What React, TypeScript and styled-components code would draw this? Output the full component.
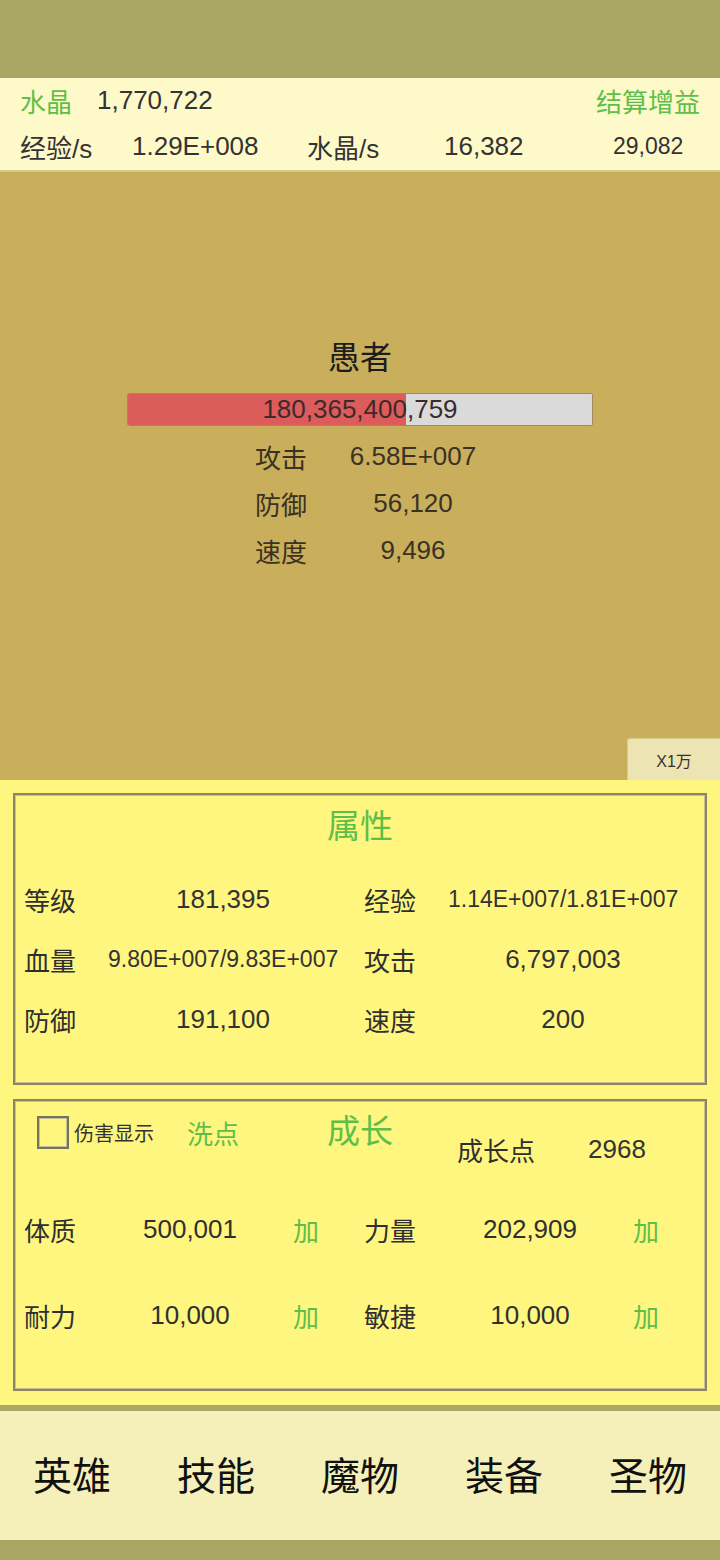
import React from "react";
import styled, { createGlobalStyle } from "styled-components";

const GlobalStyle = createGlobalStyle`
  html, body {
    margin: 0;
    padding: 0;
    background: #a9a562;
  }
  body {
    font-family: "Liberation Sans", "Noto Sans CJK SC", sans-serif;
    color: #333;
  }
`;

const GREEN = "#5dbf4a";

const Page = styled.div`
  width: 720px;
  height: 1560px;
  display: flex;
  flex-direction: column;
  background: #a9a562;
`;

const StatusSpacer = styled.div`
  height: 78px;
  flex: none;
`;

const Header = styled.div`
  height: 94px;
  flex: none;
  background: #fdf9c9;
  border-bottom: 2px solid #d8c98c;
  box-sizing: border-box;
`;

const CrystalRow = styled.div`
  height: 45px;
  display: grid;
  grid-template-columns: 77px 1fr auto;
  align-items: center;
  padding: 0 20px;
  font-size: 26px;
`;

const RateRow = styled.div`
  height: 46px;
  display: grid;
  grid-template-columns: 112px 175px 137px 169px 1fr;
  align-items: center;
  padding-left: 20px;
  font-size: 26px;
`;

const Green = styled.span`
  color: ${GREEN};
`;

const Small = styled.span`
  font-size: 23px;
`;

const Battle = styled.div`
  height: 608px;
  flex: none;
  background: #c9ae5b;
  display: flex;
  flex-direction: column;
`;

const MonsterName = styled.div`
  margin-top: 166px;
  text-align: center;
  font-size: 32px;
  line-height: 40px;
  color: #1c1c1c;
`;

const HpBar = styled.div`
  position: relative;
  margin: 15px 0 0 127px;
  width: 466px;
  height: 33px;
  box-sizing: border-box;
  border: 1px solid #a08a5c;
  border-radius: 2px;
  background: #dadada;
  overflow: hidden;
`;

const HpFill = styled.div`
  height: 100%;
  background: #dc5b5b;
`;

const HpText = styled.div`
  position: absolute;
  inset: 0;
  display: flex;
  align-items: center;
  justify-content: center;
  font-size: 26px;
  color: #3b2b2b;
`;

const MonsterStats = styled.div`
  margin: 7px 0 0 255px;
  display: grid;
  grid-template-columns: 75px 166px;
  grid-auto-rows: 47px;
  align-items: center;
  font-size: 26px;
  color: #3a3222;
`;

const Center = styled.span`
  text-align: center;
`;

const SpeedButton = styled.button`
  margin-top: auto;
  align-self: flex-end;
  width: 93px;
  height: 42px;
  background: #ece4b3;
  border: 1px solid #d4ca92;
  border-right: none;
  border-bottom: none;
  border-radius: 3px 0 0 0;
  font-family: "Liberation Sans", "Noto Sans CJK SC", sans-serif;
  font-size: 16px;
  color: #333;
  padding: 0;
`;

const PanelArea = styled.div`
  height: 625px;
  flex: none;
  background: #fff67f;
  display: flex;
  flex-direction: column;
  gap: 14px;
  padding: 13px 13px 0;
  box-sizing: border-box;
`;

const Panel = styled.div`
  height: 292px;
  box-sizing: border-box;
  border: 2px solid #8a8566;
  box-shadow: inset 1px 1px 0 #c9c08a, inset -1px -1px 0 #c9c08a;
`;

const PanelTitle = styled.div`
  height: 64px;
  line-height: 64px;
  text-align: center;
  font-size: 33px;
  color: ${GREEN};
`;

const AttrRows = styled.div`
  margin-top: 10px;
  padding-left: 9px;
  display: grid;
  grid-template-columns: 340px 340px;
  grid-auto-rows: 60px;
`;

const AttrCell = styled.div`
  display: grid;
  grid-template-columns: 84px 230px;
  align-items: center;
  font-size: 26px;
  color: #2f2f2f;
`;

const AttrValue = styled.span<{ small?: boolean }>`
  text-align: center;
  font-size: ${(p) => (p.small ? "23px" : "26px")};
  color: #333;
`;

const GrowHeader = styled.div`
  height: 85px;
  display: grid;
  grid-template-columns: 1fr auto 1fr;
  align-items: start;
  padding-top: 10px;
  box-sizing: border-box;
`;

const GrowLeft = styled.div`
  display: flex;
  align-items: center;
  height: 42px;
  padding-left: 22px;
`;

const CheckBox = styled.span`
  width: 32px;
  height: 33px;
  box-sizing: border-box;
  border: 2px solid #77725a;
  box-shadow: inset 1px 1px 0 #c8c08c, inset -1px -1px 0 #c8c08c;
  background: #fff67f;
  flex: none;
`;

const CheckLabel = styled.span`
  margin-left: 5px;
  font-size: 20px;
  color: #333;
`;

const WashButton = styled(Green)`
  margin-left: 33px;
  font-size: 26px;
`;

const GrowTitle = styled.div`
  height: 42px;
  line-height: 42px;
  font-size: 33px;
  color: ${GREEN};
`;

const GrowPoints = styled.div`
  margin-top: 17px;
  padding-left: 64px;
  height: 42px;
  display: flex;
  align-items: center;
  font-size: 26px;
  color: #2f2f2f;
`;

const PointValue = styled.span`
  width: 120px;
  margin-left: 22px;
  text-align: center;
  color: #333;
`;

const GrowRows = styled.div`
  padding-left: 9px;
  display: grid;
  grid-template-columns: 340px 340px;
  grid-auto-rows: 86px;
`;

const GrowCell = styled.div`
  display: grid;
  grid-template-columns: 84px 164px 68px;
  align-items: center;
  font-size: 26px;
  color: #2f2f2f;
`;

const AddButton = styled.span`
  text-align: center;
  color: ${GREEN};
  font-size: 26px;
`;

const NavDivider = styled.div`
  height: 6px;
  flex: none;
  background: #aca664;
`;

const Nav = styled.nav`
  height: 129px;
  flex: none;
  box-sizing: border-box;
  padding-bottom: 6px;
  background: #f5efba;
  display: grid;
  grid-template-columns: repeat(5, 1fr);
  align-items: center;
`;

const NavItem = styled.div`
  text-align: center;
  font-size: 39px;
  color: #111;
`;

const monsterStats = [
  ["攻击", "6.58E+007"],
  ["防御", "56,120"],
  ["速度", "9,496"],
];

const attrs: [string, string, boolean?][] = [
  ["等级", "181,395"],
  ["经验", "1.14E+007/1.81E+007", true],
  ["血量", "9.80E+007/9.83E+007", true],
  ["攻击", "6,797,003"],
  ["防御", "191,100"],
  ["速度", "200"],
];

const growth = [
  ["体质", "500,001"],
  ["力量", "202,909"],
  ["耐力", "10,000"],
  ["敏捷", "10,000"],
];

const tabs = ["英雄", "技能", "魔物", "装备", "圣物"];

export default function App() {
  const hpRatio = 0.6;
  return (
    <Page>
      <GlobalStyle />
      <StatusSpacer />
      <Header>
        <CrystalRow>
          <Green>水晶</Green>
          <span>1,770,722</span>
          <Green>结算增益</Green>
        </CrystalRow>
        <RateRow>
          <span>经验/s</span>
          <span>1.29E+008</span>
          <span>水晶/s</span>
          <span>16,382</span>
          <Small>29,082</Small>
        </RateRow>
      </Header>

      <Battle>
        <MonsterName>愚者</MonsterName>
        <HpBar>
          <HpFill style={{ width: `${hpRatio * 100}%` }} />
          <HpText>180,365,400,759</HpText>
        </HpBar>
        <MonsterStats>
          {monsterStats.map(([label, value]) => (
            <React.Fragment key={label}>
              <span>{label}</span>
              <Center>{value}</Center>
            </React.Fragment>
          ))}
        </MonsterStats>
        <SpeedButton>X1万</SpeedButton>
      </Battle>

      <PanelArea>
        <Panel>
          <PanelTitle>属性</PanelTitle>
          <AttrRows>
            {attrs.map(([label, value, small]) => (
              <AttrCell key={label}>
                <span>{label}</span>
                <AttrValue small={small}>{value}</AttrValue>
              </AttrCell>
            ))}
          </AttrRows>
        </Panel>

        <Panel>
          <GrowHeader>
            <GrowLeft>
              <CheckBox />
              <CheckLabel>伤害显示</CheckLabel>
              <WashButton>洗点</WashButton>
            </GrowLeft>
            <GrowTitle>成长</GrowTitle>
            <GrowPoints>
              <span>成长点</span>
              <PointValue>2968</PointValue>
            </GrowPoints>
          </GrowHeader>
          <GrowRows>
            {growth.map(([label, value]) => (
              <GrowCell key={label}>
                <span>{label}</span>
                <Center>{value}</Center>
                <AddButton>加</AddButton>
              </GrowCell>
            ))}
          </GrowRows>
        </Panel>
      </PanelArea>

      <NavDivider />
      <Nav>
        {tabs.map((t) => (
          <NavItem key={t}>{t}</NavItem>
        ))}
      </Nav>
    </Page>
  );
}
